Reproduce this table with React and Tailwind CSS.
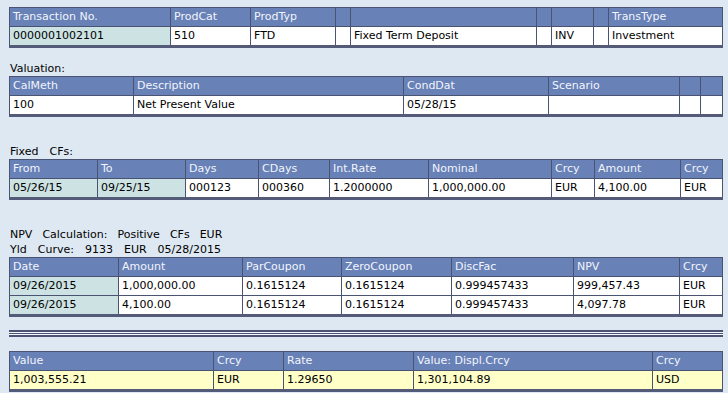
const LINE = 'border-[#4b5372]';

function Grid({ lines, rows, tint = [], className = '' }) {
  // lines: x positions of the vertical rules, table starts at x=9
  const widths = lines.map((x, i) => x - (i === 0 ? 9 : lines[i - 1]));
  return (
    <div className={`ml-[9px] w-[714px] border-t border-l ${LINE} border-b-[3px] border-b-[#535b79] ${className}`}>
      {rows.map((row, r) => (
        <div
          key={r}
          className={`flex ${r < rows.length - 1 ? `h-[19px] border-b ${LINE}` : 'h-[18px]'}`}
        >
          {widths.map((w, c) => {
            const head = r === 0;
            const bg = head ? 'bg-[#6881b7] text-[#f2f5fc]' : tint[c] || 'bg-white text-black';
            return (
              <div
                key={c}
                style={{ width: w }}
                className={`shrink-0 border-r ${LINE} ${bg} pl-[3px] leading-[18px] whitespace-nowrap overflow-hidden`}
              >
                {row[c] || ''}
              </div>
            );
          })}
        </div>
      ))}
    </div>
  );
}

const TEAL = 'bg-[#cde3e3] text-black';
const YELLOW = 'bg-[#ffffc8] text-black';

export default function App() {
  return (
    <div
      className="min-h-[393px] w-[728px] bg-[#dee8f2] pt-[7px] text-[11px] text-black"
      style={{ fontFamily: '"DejaVu Sans", Verdana, sans-serif' }}
    >
      <Grid
        lines={[170, 250, 335, 350, 536, 551, 593, 608, 722]}
        tint={[TEAL]}
        rows={[
          ['Transaction No.', 'ProdCat', 'ProdTyp', '', '', '', '', '', 'TransType'],
          ['0000001002101', '510', 'FTD', '', 'Fixed Term Deposit', '', 'INV', '', 'Investment'],
        ]}
      />

      <div className="mt-[14px] h-[14px] pl-[10px] leading-[14px]">Valuation:</div>
      <Grid
        lines={[133, 403, 548, 679, 700, 722]}
        rows={[
          ['CalMeth', 'Description', 'CondDat', 'Scenario', '', ''],
          ['100', 'Net Present Value', '05/28/15', '', '', ''],
        ]}
      />

      <div className="mt-[28px] flex h-[14px] gap-[11px] pl-[10px] leading-[14px]">
        <span>Fixed</span>
        <span>CFs:</span>
      </div>
      <Grid
        lines={[97, 185, 258, 329, 428, 551, 594, 680, 722]}
        tint={[TEAL, TEAL]}
        rows={[
          ['From', 'To', 'Days', 'CDays', 'Int.Rate', 'Nominal', 'Crcy', 'Amount', 'Crcy'],
          ['05/26/15', '09/25/15', '000123', '000360', '1.2000000', '1,000,000.00', 'EUR', '4,100.00', 'EUR'],
        ]}
      />

      <div className="mt-[27px] flex h-[15px] gap-[10px] pl-[10px] leading-[15px]">
        <span>NPV</span>
        <span>Calculation:</span>
        <span>Positive</span>
        <span>CFs</span>
        <span>EUR</span>
      </div>
      <div className="flex h-[15px] gap-[11px] pl-[10px] leading-[15px]">
        <span>Yld</span>
        <span>Curve:</span>
        <span>9133</span>
        <span>EUR</span>
        <span>05/28/2015</span>
      </div>
      <Grid
        lines={[118, 242, 341, 451, 573, 679, 722]}
        tint={[TEAL]}
        rows={[
          ['Date', 'Amount', 'ParCoupon', 'ZeroCoupon', 'DiscFac', 'NPV', 'Crcy'],
          ['09/26/2015', '1,000,000.00', '0.1615124', '0.1615124', '0.999457433', '999,457.43', 'EUR'],
          ['09/26/2015', '4,100.00', '0.1615124', '0.1615124', '0.999457433', '4,097.78', 'EUR'],
        ]}
      />

      <div className="ml-[9px] mt-[13px] flex w-[714px] flex-col">
        <div className="h-[2px] bg-[#4b5372]" />
        <div className="h-px bg-[#f4f7fb]" />
        <div className="h-px bg-[#4b5372]" />
        <div className="h-px bg-[#f4f7fb]" />
        <div className="h-[2px] bg-[#4b5372]" />
      </div>

      <Grid
        className="mt-[14px]"
        lines={[213, 283, 413, 652, 722]}
        tint={[YELLOW, YELLOW, YELLOW, YELLOW, YELLOW]}
        rows={[
          ['Value', 'Crcy', 'Rate', 'Value: Displ.Crcy', 'Crcy'],
          ['1,003,555.21', 'EUR', '1.29650', '1,301,104.89', 'USD'],
        ]}
      />
    </div>
  );
}
